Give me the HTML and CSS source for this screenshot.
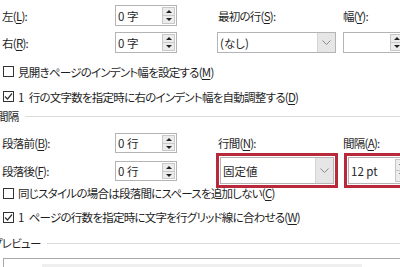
FILE: index.html
```html
<!DOCTYPE html>
<html lang="ja">
<head>
<meta charset="utf-8">
<link rel="stylesheet" href="styles.css">
</head>
<body>
<div class="dlg">
  <div class="grid top">
    <div class="lbl">左(<u>L</u>):</div>
    <div class="spin"><span class="val">0 字</span><span class="btns"><span class="up"></span><span class="dn"></span></span></div>
    <div class="lbl sub">最初の行(<u>S</u>):</div>
    <div class="lbl">幅(<u>Y</u>):</div>

    <div class="lbl">右(<u>R</u>):</div>
    <div class="spin"><span class="val">0 字</span><span class="btns"><span class="up"></span><span class="dn"></span></span></div>
    <div class="sel"><span class="val">(なし)</span><span class="chev"><svg width="9" height="5" viewBox="0 0 9 5"><path d="M0.5 0.5 L4.5 4.5 L8.5 0.5" fill="none" stroke="#8a8a8a" stroke-width="1"/></svg></span></div>
    <div class="spin wide"><span class="val"></span><span class="btns"><span class="up"></span><span class="dn"></span></span></div>
  </div>

  <div class="chk"><span class="box"></span>見開きページのインデント幅を設定する(<u>M</u>)</div>
  <div class="chk"><span class="box"><svg width="11" height="11" viewBox="0 0 11 11"><path d="M2 5.5 L4.5 8 L9 2.5" fill="none" stroke="#333" stroke-width="1.2"/></svg></span><span class="num">1</span>行の文字数を指定時に右のインデント幅を自動調整する(<u>D</u>)</div>

  <div class="sect s1"><span class="st">間隔</span><span class="rule"></span></div>

  <div class="grid mid">
    <div class="lbl">段落前(<u>B</u>):</div>
    <div class="spin"><span class="val">0 行</span><span class="btns"><span class="up"></span><span class="dn"></span></span></div>
    <div class="lbl sub">行間(<u>N</u>):</div>
    <div class="lbl">間隔(<u>A</u>):</div>

    <div class="lbl">段落後(<u>F</u>):</div>
    <div class="spin"><span class="val">0 行</span><span class="btns"><span class="up"></span><span class="dn"></span></span></div>
    <div class="red"><div class="sel in"><span class="val">固定値</span><span class="chev"><svg width="9" height="5" viewBox="0 0 9 5"><path d="M0.5 0.5 L4.5 4.5 L8.5 0.5" fill="none" stroke="#8a8a8a" stroke-width="1"/></svg></span></div></div>
    <div class="red r2"><div class="spin in wide"><span class="val">12 pt</span><span class="btns"><span class="up"></span><span class="dn"></span></span></div></div>
  </div>

  <div class="chk c3"><span class="box"></span>同じスタイルの場合は段落間にスペースを追加しない(<u>C</u>)</div>
  <div class="chk c3"><span class="box"><svg width="11" height="11" viewBox="0 0 11 11"><path d="M2 5.5 L4.5 8 L9 2.5" fill="none" stroke="#333" stroke-width="1.2"/></svg></span><span class="num">1</span>ページの行数を指定時に文字を行グリッド線に合わせる(<u>W</u>)</div>

  <div class="sect s2"><span class="st">プレビュー</span><span class="rule"></span></div>

  <div class="preview"><span class="ptext"></span></div>
</div>
</body>
</html>
```

FILE: styles.css
```css
html, body {
  margin: 0;
  padding: 0;
  background: #ffffff;
  overflow: hidden;
}
body {
  width: 400px;
  height: 267px;
}
.dlg {
  width: 400px;
  overflow: hidden;
  height: 267px;
  padding-top: 5px;
  box-sizing: border-box;
  font-family: "Noto Sans CJK JP", "Noto Sans", sans-serif;
  font-feature-settings: "palt" 1;
  font-size: 11.5px;
  letter-spacing: -0.75px;
  line-height: 16px;
  color: #1f1f1f;
}
u {
  text-decoration: underline;
  text-underline-offset: 2px;
}
.num {
  margin-right: 5px;
}
.grid {
  display: grid;
  padding-left: 2px;
  width: 440px;
}
.grid .sub {
  margin-left: 40px;
  padding-left: 1px;
}
.grid > :nth-child(4n+3).sel {
  margin-left: 40px;
  width: 119px;
}
.top {
  grid-template-rows: 21px 21px;
  row-gap: 6px;
  grid-template-columns: 113px 62px 160px 80px;
}
.mid {
  grid-template-rows: 20px 20px;
  row-gap: 8px;
  margin-top: 10px;
  grid-template-columns: 113px 62px 160px 80px;
}
.top > :nth-child(4n),
.mid > :nth-child(4n) {
  margin-left: 6px;
}
.lbl {
  display: flex;
  align-items: center;
  white-space: nowrap;
}
.spin {
  box-sizing: border-box;
  border: 1px solid #b4b4b4;
  display: flex;
  align-items: center;
  justify-content: space-between;
  background: #fff;
  padding-left: 2px;
}
.spin .val {
  letter-spacing: 0;
}
.spin.wide {
  width: 62px;
}
.btns {
  display: flex;
  flex-direction: column;
  width: 13px;
  height: calc(100% - 2px);
  margin-right: 1px;
  border: 1px solid #c8c8c8;
  box-sizing: border-box;
  background: #ececec;
}
.btns span {
  flex: 1;
  position: relative;
}
.btns .up {
  border-bottom: 1px solid #c8c8c8;
}
.btns .up::after,
.btns .dn::after {
  content: "";
  position: absolute;
  left: 3px;
  width: 0;
  height: 0;
  border-left: 3px solid transparent;
  border-right: 3px solid transparent;
}
.btns .up::after {
  top: 2px;
  border-bottom: 3px solid #222;
}
.btns .dn::after {
  top: 2px;
  border-top: 3px solid #222;
}
.sel {
  box-sizing: border-box;
  border: 1px solid #b4b4b4;
  display: flex;
  align-items: stretch;
  justify-content: space-between;
  background: #fff;
}
.sel .val {
  display: flex;
  align-items: center;
  padding-left: 2px;
  letter-spacing: 0;
}
.chev {
  width: 17px;
  background: #e6e6e6;
  border-left: 1px solid #d4d4d4;
  display: flex;
  align-items: center;
  justify-content: center;
}
.red {
  box-sizing: border-box;
  border: 3px solid #b82a3a;
  padding: 1px;
  margin: -8px 0 -7px 39px;
  width: 122px;
  display: flex;
}
.red .in {
  flex: 1;
  height: 27px;
}
.mid > .red.r2 {
  margin-left: 7px;
  width: 70px;
}
.chk {
  display: flex;
  align-items: center;
  height: 25px;
  padding-left: 3px;
  white-space: nowrap;
}
.top + .chk {
  margin-top: 6px;
}
.chk.c3 {
  height: 24px;
}
.box {
  box-sizing: border-box;
  width: 11px;
  height: 11px;
  border: 1px solid #333;
  margin-right: 4px;
  display: flex;
  align-items: center;
  justify-content: center;
  flex: none;
}
.box svg {
  margin: -1px;
}
.sect {
  display: flex;
  align-items: center;
  height: 14px;
}
.s1 .st {
  margin-left: -3px;
}
.s2 {
  margin-top: 7px;
}
.s2 .st {
  margin-left: -8px;
}
.rule {
  flex: 1;
  height: 1px;
  background: #dcdcdc;
  margin-left: 6px;
}
.preview {
  margin: 8px 0 0 3px;
  height: 30px;
  border: 1px solid #a8a8a8;
  border-right: none;
}
.ptext {
  display: block;
  margin: 5px 0 0 38px;
  width: 320px;
  height: 3px;
  background: #efefef;
}
```
